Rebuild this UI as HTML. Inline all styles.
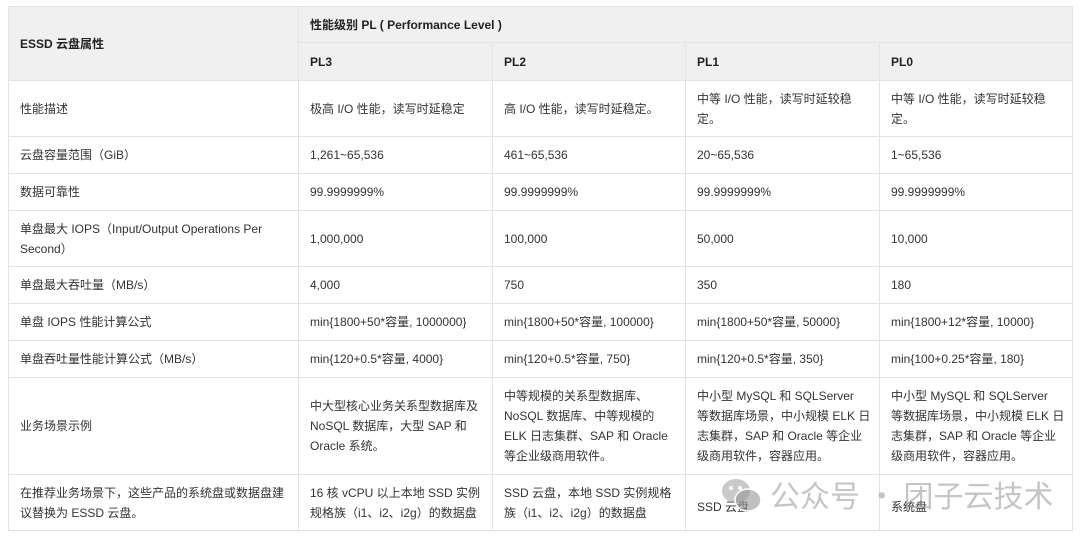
<!DOCTYPE html>
<html><head><meta charset="utf-8"><style>
html,body{margin:0;padding:0;background:#fff;width:1080px;height:537px;overflow:hidden}
table{position:absolute;left:8px;top:6px;border-collapse:collapse;table-layout:fixed;font-family:"Liberation Sans","Noto Sans CJK SC",sans-serif;font-size:12px;color:#333;line-height:20px}
td,th{border:1px solid #e3e3e3;padding:0 0 0 11px;vertical-align:middle;text-align:left;white-space:nowrap}
th{background:#f0f0f0;font-weight:bold;color:#222}
.wm{position:absolute;left:770px;top:474px;font-family:"Noto Sans CJK SC",sans-serif;font-size:30px;line-height:40px;color:rgba(150,150,150,.55);letter-spacing:0;white-space:nowrap}
.ic{position:absolute;left:720px;top:478px}
</style></head><body>
<table>
<colgroup><col style="width:290px"><col style="width:194px"><col style="width:193px"><col style="width:194px"><col style="width:193px"></colgroup>
<tr style="height:36px"><th rowspan="2">ESSD 云盘属性</th><th colspan="4">性能级别 PL ( Performance Level )</th></tr>
<tr style="height:38px"><th>PL3</th><th>PL2</th><th>PL1</th><th>PL0</th></tr>
<tr style="height:56px"><td>性能描述</td><td>极高 I/O 性能，读写时延稳定</td><td>高 I/O 性能，读写时延稳定。</td><td>中等 I/O 性能，读写时延较稳<br>定。</td><td>中等 I/O 性能，读写时延较稳<br>定。</td></tr>
<tr style="height:37px"><td>云盘容量范围（GiB）</td><td>1,261~65,536</td><td>461~65,536</td><td>20~65,536</td><td>1~65,536</td></tr>
<tr style="height:37px"><td>数据可靠性</td><td>99.9999999%</td><td>99.9999999%</td><td>99.9999999%</td><td>99.9999999%</td></tr>
<tr style="height:56px"><td>单盘最大 IOPS（Input/Output Operations Per<br>Second）</td><td>1,000,000</td><td>100,000</td><td>50,000</td><td>10,000</td></tr>
<tr style="height:37px"><td>单盘最大吞吐量（MB/s）</td><td>4,000</td><td>750</td><td>350</td><td>180</td></tr>
<tr style="height:37px"><td>单盘 IOPS 性能计算公式</td><td>min{1800+50*容量, 1000000}</td><td>min{1800+50*容量, 100000}</td><td>min{1800+50*容量, 50000}</td><td>min{1800+12*容量, 10000}</td></tr>
<tr style="height:37px"><td>单盘吞吐量性能计算公式（MB/s）</td><td>min{120+0.5*容量, 4000}</td><td>min{120+0.5*容量, 750}</td><td>min{120+0.5*容量, 350}</td><td>min{100+0.25*容量, 180}</td></tr>
<tr style="height:97px"><td>业务场景示例</td><td>中大型核心业务关系型数据库及<br>NoSQL 数据库，大型 SAP 和<br>Oracle 系统。</td><td>中等规模的关系型数据库、<br>NoSQL 数据库、中等规模的<br>ELK 日志集群、SAP 和 Oracle<br>等企业级商用软件。</td><td>中小型 MySQL 和 SQLServer<br>等数据库场景，中小规模 ELK 日<br>志集群，SAP 和 Oracle 等企业<br>级商用软件，容器应用。</td><td>中小型 MySQL 和 SQLServer<br>等数据库场景，中小规模 ELK 日<br>志集群，SAP 和 Oracle 等企业<br>级商用软件，容器应用。</td></tr>
<tr style="height:56px"><td>在推荐业务场景下，这些产品的系统盘或数据盘建<br>议替换为 ESSD 云盘。</td><td>16 核 vCPU 以上本地 SSD 实例<br>规格族（i1、i2、i2g）的数据盘</td><td>SSD 云盘，本地 SSD 实例规格<br>族（i1、i2、i2g）的数据盘</td><td style="padding-top:8px">SSD 云盘</td><td style="padding-top:8px">系统盘</td></tr>
</table>
<svg class="ic" width="44" height="36" viewBox="0 0 44 36"><ellipse cx="16" cy="13" rx="14" ry="12" fill="rgba(150,150,150,.5)"/><ellipse cx="28" cy="22" rx="13" ry="11" fill="rgba(150,150,150,.6)" stroke="#fff" stroke-width="1.5"/><circle cx="11" cy="10" r="2" fill="#fff"/><circle cx="20" cy="10" r="2" fill="#fff"/></svg>
<div class="wm">公众号 · 团子云技术</div>
</body></html>
